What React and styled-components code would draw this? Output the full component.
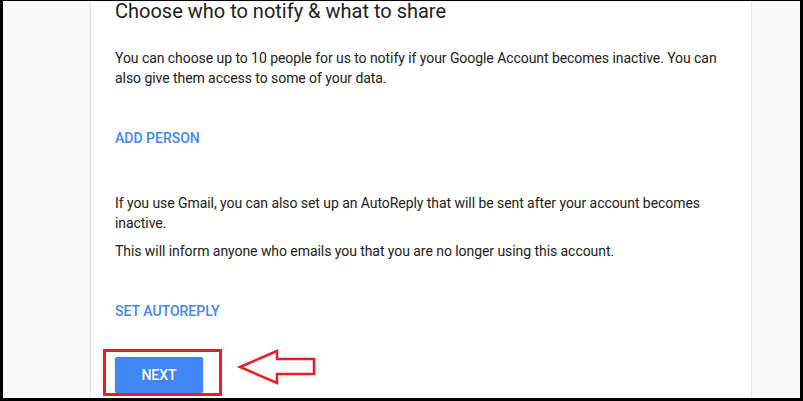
import React from 'react';
import styled, {createGlobalStyle} from "styled-components";

const GlobalStyle = createGlobalStyle`
    html, body {
        margin: 0;
        padding: 0;
        background: #000;
    }
`;

const Frame = styled.div`
    position: relative;
    width: 803px;
    height: 401px;
    box-sizing: border-box;
    border: 3px solid #000;
    border-top-width: 1px;
    overflow: hidden;
    display: flex;
    background-color: #fafafa;
    font-family: Roboto, "Liberation Sans", sans-serif;
`;

const Side = styled.div`
    width: ${props => props.width ? props.width : "auto"};
    flex: ${props => props.width ? "none" : 1};
    background-color: #fafafa;
`;

const Card = styled.div`
    width: 662px;
    flex: none;
    box-sizing: border-box;
    border-left: 1px solid #e2e2e2;
    border-right: 1px solid #e2e2e2;
    box-shadow: 0 0 2px rgba(0,0,0,0.08);
    background-color: #fff;
    padding: 0 24px;
    display: flex;
    flex-direction: column;
    align-items: flex-start;
`;

const Title = styled.h2`
    margin: 0;
    font-size: 20px;
    line-height: 20px;
    font-weight: 400;
    color: #212121;
`;

const Text = styled.p`
    margin: ${props => props.margin ? props.margin : "0"};
    font-size: 14px;
    line-height: 20px;
    letter-spacing: -0.06px;
    color: #212121;
`;

const Link = styled.a`
    margin-top: ${props => props.top};
    font-size: 14px;
    line-height: 20px;
    font-weight: 500;
    color: #4285f4;
    text-transform: uppercase;
    text-decoration: none;
    cursor: pointer;
`;

const Button = styled.button`
    margin-top: 36px;
    width: 88px;
    height: 36px;
    flex: none;
    border: none;
    border-radius: 2px;
    background-color: #4285f4;
    box-shadow: 0 1px 3px rgba(0,0,0,0.2);
    color: #fff;
    font-family: inherit;
    font-size: 14px;
    font-weight: 500;
    text-transform: uppercase;
    cursor: pointer;
`;

// paint-style annotation drawn over the screenshot
const Highlight = styled.div`
    position: absolute;
    left: 100px;
    top: 348px;
    width: 119px;
    height: 47px;
    border: 3px solid #ed1c24;
    box-sizing: border-box;
`;

const Arrow = styled.svg`
    position: absolute;
    left: 233px;
    top: 347px;
`;

const App = () => {
    return <>
        <GlobalStyle />
        <Frame>
            <Side width="87px" />
            <Card>
                <Title>Choose who to notify &amp; what to share</Title>
                <Text margin="27px 0 0">
                    You can choose up to 10 people for us to notify if your Google Account becomes inactive. You can also give them access to some of your data.
                </Text>
                <Link top="40px">Add person</Link>
                <Text margin="45px 0 0">
                    If you use Gmail, you can also set up an AutoReply that will be sent after your account becomes inactive.
                </Text>
                <Text margin="8px 0 0">
                    This will inform anyone who emails you that you are no longer using this account.
                </Text>
                <Link top="40px">Set autoreply</Link>
                <Button>Next</Button>
            </Card>
            <Side />
            <Highlight />
            <Arrow width="82" height="40" viewBox="236 348 82 40">
                <polygon points="240,367 277,351 277,359 314,359 314,374 277,374 277,383"
                    fill="none" stroke="#ed1c24" strokeWidth="2.5" />
            </Arrow>
        </Frame>
    </>
};

export default App;
